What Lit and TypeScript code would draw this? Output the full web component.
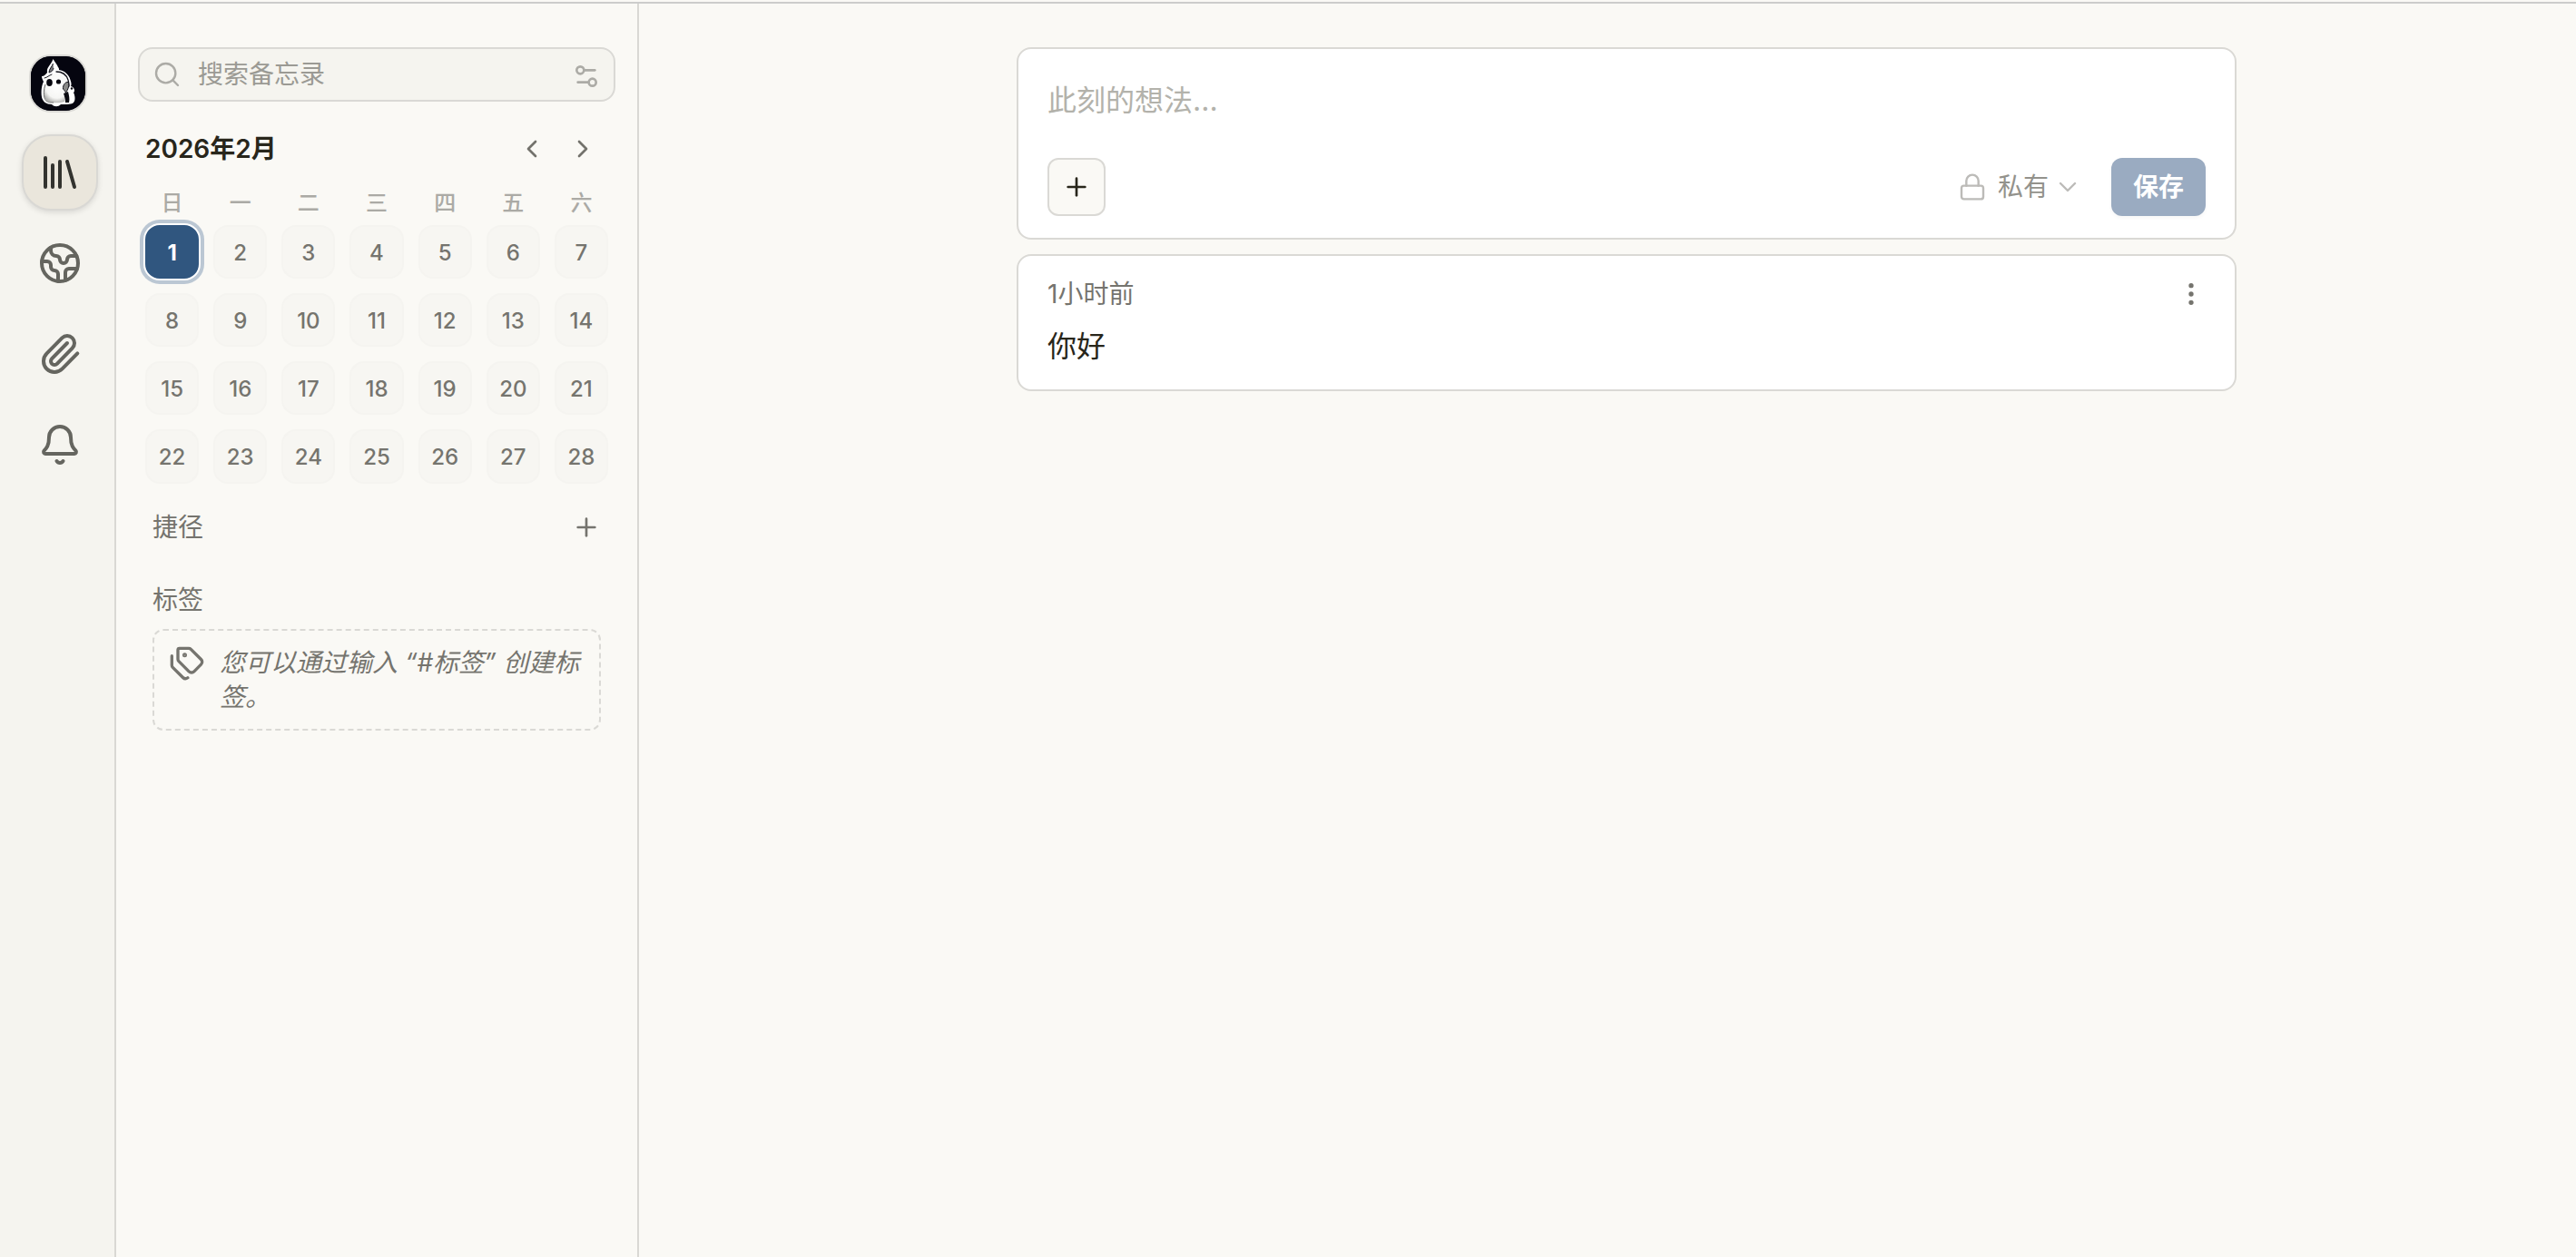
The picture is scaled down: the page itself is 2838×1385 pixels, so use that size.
import { LitElement, html, css, svg } from "lit";
import { customElement, property, state } from "lit/decorators.js";
import { classMap } from "lit/directives/class-map.js";

const icons: Record<string, unknown> = {
  library: svg`<path d="m16 6 4 14"/><path d="M12 6v14"/><path d="M8 8v12"/><path d="M4 4v16"/>`,
  earth: svg`<path d="M21.54 15H17a2 2 0 0 0-2 2v4.54"/><path d="M7 3.34V5a3 3 0 0 0 3 3a2 2 0 0 1 2 2c0 1.1.9 2 2 2a2 2 0 0 0 2-2c0-1.1.9-2 2-2h3.17"/><path d="M11 21.95V18a2 2 0 0 0-2-2a2 2 0 0 1-2-2v-1a2 2 0 0 0-2-2H2.05"/><circle cx="12" cy="12" r="10"/>`,
  paperclip: svg`<path d="m16 6-8.414 8.586a2 2 0 0 0 2.829 2.829l8.414-8.586a4 4 0 1 0-5.657-5.657l-8.379 8.551a6 6 0 1 0 8.485 8.485l8.379-8.551"/>`,
  bell: svg`<path d="M10.268 21a2 2 0 0 0 3.464 0"/><path d="M3.262 15.326A1 1 0 0 0 4 17h16a1 1 0 0 0 .74-1.673C19.41 13.956 18 12.499 18 8A6 6 0 0 0 6 8c0 4.499-1.411 5.956-2.738 7.326"/>`,
  search: svg`<circle cx="11" cy="11" r="8"/><path d="m21 21-4.34-4.34"/>`,
  sliders: svg`<path d="M14 17H5"/><path d="M19 7h-9"/><circle cx="17" cy="17" r="3"/><circle cx="7" cy="7" r="3"/>`,
  left: svg`<path d="m15 18-6-6 6-6"/>`,
  right: svg`<path d="m9 18 6-6-6-6"/>`,
  down: svg`<path d="m6 9 6 6 6-6"/>`,
  plus: svg`<path d="M5 12h14"/><path d="M12 5v14"/>`,
  lock: svg`<rect width="18" height="11" x="3" y="11" rx="2" ry="2"/><path d="M7 11V7a5 5 0 0 1 10 0v4"/>`,
  dots: svg`<circle cx="12" cy="12" r="1"/><circle cx="12" cy="5" r="1"/><circle cx="12" cy="19" r="1"/>`,
  tags: svg`<path d="M13.172 2a2 2 0 0 1 1.414.586l6.71 6.71a2.4 2.4 0 0 1 0 3.408l-4.592 4.592a2.4 2.4 0 0 1-3.408 0l-6.71-6.71A2 2 0 0 1 6 9.172V3a1 1 0 0 1 1-1z"/><path d="M2 7v6.172a2 2 0 0 0 .586 1.414l6.71 6.71a2.4 2.4 0 0 0 3.191.193"/><circle cx="10.5" cy="6.5" r=".5" fill="currentColor"/>`,
};

@customElement("app-icon")
class AppIcon extends LitElement {
  @property() name = "";
  static styles = css`
    :host { display: block; flex: none; width: 32px; height: 32px; }
    .icon { display: block; width: 100%; height: 100%; fill: none; stroke: currentColor; stroke-width: var(--stroke, 2); stroke-linecap: round; stroke-linejoin: round; }
  `;
  render() {
    return html`<svg class="icon" viewBox="0 0 24 24" aria-hidden="true">${icons[this.name]}</svg>`;
  }
}

const base = css`
  :host, * { box-sizing: border-box; }
  button, input, textarea, select { font: inherit; color: inherit; margin: 0; padding: 0; border: 0; background: none; outline: none; }
  button { cursor: pointer; }
  h2, p { margin: 0; }
  .bare { display: flex; align-items: center; justify-content: center; }
`;

@customElement("nav-rail")
class NavRail extends LitElement {
  @state() active = "library";
  static styles = [base, css`
    :host { display: block; flex: none; width: 128px; background: #f5f4ef; border-right: 2px solid #d9d8d4; }
    .rail { display: flex; flex-direction: column; align-items: center; gap: 16px; padding: 56px 0 0 6px; }
    .avatar { width: 64px; height: 64px; margin: 0 4px 8px 0; border: 2px solid #dad9d5; border-radius: 24px; overflow: hidden; background: #05050f; }
    .picture { display: block; width: 100%; height: 100%; }
    .item { display: flex; align-items: center; justify-content: center; width: 84px; height: 84px; border: 2px solid transparent; border-radius: 32px; color: #65655f; }
    .item.on { color: #33332f; background: #eae6dc; border-color: #d9d8d4; box-shadow: 0 2px 6px rgba(0, 0, 0, 0.12); }
    .glyph { width: 48px; height: 48px; }
  `];
  render() {
    const items = [["library", "备忘录"], ["earth", "探索"], ["paperclip", "附件"], ["bell", "通知"]];
    return html`<nav class="rail">
      <a class="avatar" href="#me" aria-label="头像">
        <svg class="picture" viewBox="0 0 60 60" aria-hidden="true">
          <defs>
            <radialGradient id="body" cx=".55" cy=".35" r=".7">
              <stop offset="0" stop-color="#ffffff"/><stop offset=".7" stop-color="#f6f6f4"/><stop offset="1" stop-color="#a8a8a6"/>
            </radialGradient>
          </defs>
          <rect width="60" height="60" fill="#05050f"/>
          <path d="M24.500 3C26 6 29 9 30 12C31 13 31 14 31 15C37 16 42 20 43.500 26C44.500 29 45 31 44 33C48 34 49 38 47 40C49 44 49 49 47 51C45 53 40 53 33 53C30 56 26 56 23 53C17 53 13 50 12 45C11 38 12 32 14 28C13 26 12 24 12 22C15 22 16 20 18 18C17 12 22 10 24.500 3Z" fill="#fff"/>
          <path d="M16 25C19 24 21 21 25 20C32 18 37 20 39 25C41 29 41 32 39 35C37 39 38 45 37 50C30 52 19 52 16 47C13 42 14 33 16 25Z" fill="url(#body)"/>
          <path d="M24.500 8C23 12 20 14 20 18C22 17 24 17 25 13" fill="#77777a" stroke="#12121a" stroke-width="1" stroke-linejoin="round"/>
          <path d="M28 17C34 17 39 20 41 26C42 29 42 31 42 33" fill="none" stroke="#12121a" stroke-width="1.300" stroke-linecap="round"/>
          <path d="M15 24C18 23.500 20 21 23 20" fill="none" stroke="#12121a" stroke-width="1" stroke-linecap="round"/>
          <path d="M16 31C14 37 14 42 15 46C17 51 21 51 25 51" fill="none" stroke="#6c6c6c" stroke-width="1"/>
          <ellipse cx="20.500" cy="29" rx="3.300" ry="4" fill="#07070f"/>
          <circle cx="30.500" cy="28" r="2.600" fill="#07070f"/>
          <path d="M35.500 36C35 32 38 28 41 28.500C43 31 41 37 38.500 40C37.500 38 36.500 37 35.500 36Z" fill="#8a8a88" stroke="#111118" stroke-width="1"/>
          <path d="M36 41L41 39C42 43 43 47 42 51H38C38 47 37 44 36 41Z" fill="#0b0b12"/>
          <circle cx="45" cy="35.500" r="1.200" fill="#0b0b12"/>
        </svg>
      </a>
      ${items.map(([id, label]) => html`<a class=${classMap({ item: true, on: id === this.active })} href="#${id}" aria-label=${label}
        @click=${() => (this.active = id)}><app-icon class="glyph" name=${id}></app-icon></a>`)}
    </nav>`;
  }
}

@customElement("month-calendar")
class MonthCalendar extends LitElement {
  @state() selected = 1;
  static styles = [base, css`
    :host { display: block; padding: 0 8px; }
    .head { display: flex; align-items: center; height: 56px; color: #28261b; }
    .title { flex: 1; font-size: 28px; line-height: 40px; font-weight: 600; }
    .step { width: 56px; height: 56px; color: #73726c; }
    .week { display: grid; grid-template-columns: repeat(7, 1fr); column-gap: 16px; padding-top: 16px; font-size: 24px; line-height: 32px; font-weight: 500; text-align: center; color: #abaaa5; }
    .days { display: grid; grid-template-columns: repeat(7, 1fr); gap: 16px; padding-top: 8px; }
    .day { aspect-ratio: 1; padding-top: 2px; border: 2px solid #f5f4f0; border-radius: 16px; background: #f7f6f2; color: #75746e; font-size: 24px; line-height: 32px; font-weight: 500; }
    .day.on { border-color: #30567f; background: #30567f; color: #fff; font-weight: 700; box-shadow: 0 0 0 2px #fff, 0 0 0 6px #bbc7d3; }
  `];
  render() {
    return html`
      <div class="head">
        <h2 class="title">2026年2月</h2>
        <button class="step bare" aria-label="上个月"><app-icon name="left"></app-icon></button>
        <button class="step bare" aria-label="下个月"><app-icon name="right"></app-icon></button>
      </div>
      <div class="week">${["日", "一", "二", "三", "四", "五", "六"].map((d) => html`<span>${d}</span>`)}</div>
      <div class="days">${Array.from({ length: 28 }, (_, i) => i + 1).map((d) => html`
        <button class=${classMap({ day: true, bare: true, on: d === this.selected })} @click=${() => (this.selected = d)}>${d}</button>`)}
      </div>`;
  }
}

@customElement("side-panel")
class SidePanel extends LitElement {
  static styles = [base, css`
    :host { display: block; flex: none; width: 576px; padding: 48px 24px; border-right: 2px solid #d9d8d4; }
    .search { display: flex; align-items: center; height: 60px; padding: 0 14px; margin-bottom: 24px; border: 2px solid #dad9d5; border-radius: 16px; background: #f5f4ef; color: #acaba6; --stroke: 1.8; }
    .query { flex: 1; min-width: 0; padding: 0 18px; font-size: 28px; line-height: 40px; }
    .query::placeholder { color: #9b9a94; opacity: 1; }
    .tune { padding-top: 4px; --stroke: 2; }
    .section { display: flex; align-items: center; justify-content: space-between; height: 40px; padding: 0 16px; margin-top: 28px; font-size: 28px; line-height: 40px; color: #75746e; }
    .section + .section { margin-top: 40px; }
    .name { font-size: 28px; font-weight: 400; }
    .hint { display: flex; gap: 16px; margin: 12px 16px 0; padding: 16px; border: 2px dashed #dad9d5; border-radius: 12px; color: #75746e; }
    .mark { width: 40px; height: 40px; }
    .words { flex: 1; font-size: 28px; line-height: 38px; font-style: italic; }
  `];
  render() {
    return html`
      <label class="search">
        <app-icon name="search"></app-icon>
        <input class="query" type="text" placeholder="搜索备忘录" aria-label="搜索备忘录">
        <button class="tune bare" aria-label="筛选"><app-icon name="sliders"></app-icon></button>
      </label>
      <month-calendar></month-calendar>
      <div class="section"><h2 class="name">捷径</h2><button class="bare" aria-label="新建捷径"><app-icon name="plus"></app-icon></button></div>
      <div class="section"><h2 class="name">标签</h2></div>
      <div class="hint"><app-icon class="mark" name="tags"></app-icon><p class="words">您可以通过输入 “#标签” 创建标签。</p></div>`;
  }
}

@customElement("memo-feed")
class MemoFeed extends LitElement {
  static styles = [base, css`
    :host { display: block; flex: 1; min-width: 0; padding: 48px 0 48px 42px; }
    .column { display: flex; flex-direction: column; gap: 16px; max-width: 1344px; margin: 0 auto; }
    .card { padding: 24px 32px; border: 2px solid #dad9d5; border-radius: 16px; background: #fff; color: #28261b; }
    .text { display: block; width: 100%; height: 88px; padding: 9px 0 0; resize: none; font-size: 32px; line-height: 48px; }
    .text::placeholder { color: #b3b2ab; opacity: 1; }
    .tools { display: flex; align-items: center; justify-content: space-between; padding-top: 8px; }
    .add { width: 64px; height: 64px; border: 2px solid #dad9d5; border-radius: 12px; background: #faf9f5; }
    .end, .scope { display: flex; align-items: center; }
    .end { gap: 32px; }
    .scope { color: #bcbbb8; --stroke: 1.8; }
    .choice { appearance: none; margin: 0 4px 0 12px; font-size: 28px; line-height: 40px; color: #93928c; }
    .save { height: 64px; padding: 0 24px; border-radius: 12px; background: #9aabc1; color: #fff; font-size: 28px; line-height: 40px; font-weight: 600; box-shadow: 0 2px 4px rgba(0, 0, 0, 0.04); }
    .meta { display: flex; align-items: center; justify-content: space-between; height: 36px; margin-bottom: 16px; color: #75746e; font-size: 28px; line-height: 36px; }
    .body { font-size: 32px; line-height: 47px; }
  `];
  render() {
    return html`<div class="column">
      <form class="card" @submit=${(e: Event) => e.preventDefault()}>
        <textarea class="text" placeholder="此刻的想法..." aria-label="此刻的想法"></textarea>
        <div class="tools">
          <button class="add bare" type="button" aria-label="添加"><app-icon name="plus"></app-icon></button>
          <div class="end">
            <label class="scope"><app-icon name="lock"></app-icon>
              <select class="choice" aria-label="可见范围"><option>私有</option></select>
              <app-icon name="down"></app-icon></label>
            <button class="save">保存</button>
          </div>
        </div>
      </form>
      <article class="card">
        <div class="meta"><time>1小时前</time><button class="bare" aria-label="更多"><app-icon name="dots"></app-icon></button></div>
        <p class="body">你好</p>
      </article>
    </div>`;
  }
}

@customElement("app-root")
class AppRoot extends LitElement {
  static styles = css`
    :host { display: block; box-sizing: border-box; min-height: 100vh; padding-top: 2px; background: #faf9f5; font-family: Inter, "Noto Sans CJK SC", sans-serif; }
    .page { box-sizing: border-box; display: flex; min-height: calc(100vh - 2px); border-top: 2px solid #cccccb; }
  `;
  render() {
    return html`<div class="page" lang="zh-CN"><nav-rail></nav-rail><side-panel></side-panel><memo-feed></memo-feed></div>`;
  }
}
